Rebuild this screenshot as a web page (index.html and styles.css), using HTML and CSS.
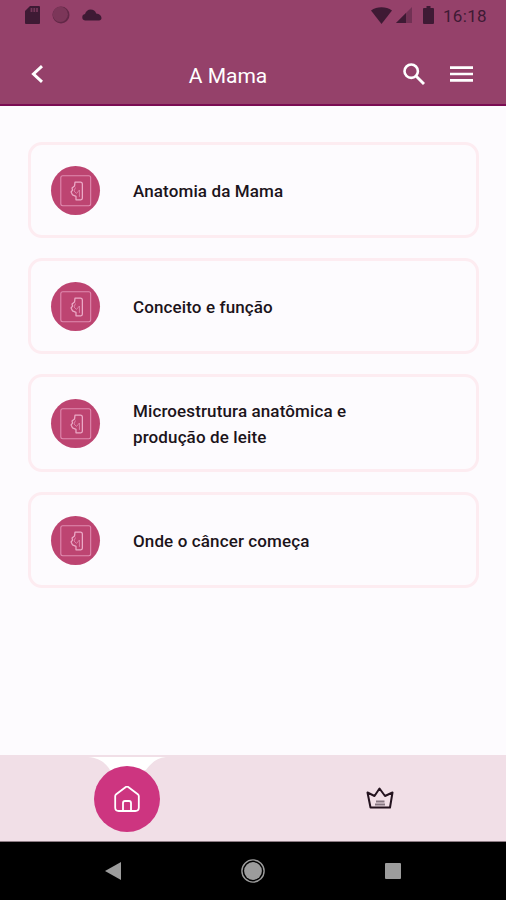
FILE: index.html
```html
<!DOCTYPE html>
<html lang="pt-BR">
<head>
    <meta charset="UTF-8">
    <meta name="viewport" content="width=device-width, initial-scale=1.0">
    <title>A Mama</title>
    <link rel="stylesheet" href="styles.css">
</head>
<body>
    <svg class="symbols" aria-hidden="true">
        <symbol id="icon-topic" viewBox="0 0 50 50">
            <rect x="10" y="10" width="30.500" height="30.500" rx="2" fill="none" stroke="#e08bb0" stroke-width="1.100"/>
            <path d="M24.500 16.500h5.500q2 0 2 2V33q0 1.500-1.500 1.500h-5V31l-3.500-1.500-1.500-3 1.500-2-.5-2 2.500-2z" fill="none" stroke="#eba9c6" stroke-width="1.300" stroke-linejoin="round"/>
            <path d="M25 22l-1.500 3.500L26 28l3-3.500v7" fill="none" stroke="#e08bb0" stroke-width=".9"/>
        </symbol>
    </svg>

    <header class="header">
        <div class="status-bar">
            <div class="status-left">
                <svg width="15" height="18" viewBox="0 0 15 18">
                    <path fill="#3e1a34" d="M5 0h9q1 0 1 1v16q0 1-1 1H1q-1 0-1-1V5z"/>
                    <path stroke="#743658" stroke-width="1.800" d="M6.500 2v4M9.300 2v4M12 2v4"/>
                </svg>
                <svg width="18" height="18" viewBox="0 0 18 18">
                    <circle cx="9" cy="9" r="8.500" fill="#622847"/>
                    <circle cx="8.300" cy="8.300" r="7.600" fill="#7c3659"/>
                </svg>
                <svg width="20" height="12" viewBox="0 0 20 12">
                    <path fill="#3e1a34" d="M3 11.500a3.300 3.300 0 0 1 0-6.500C4 2 6 .5 8.500.5c2.800 0 5 1.500 5.700 4 3.300.2 5.300 2.300 5.300 4.500 0 1.500-1 2.500-2.500 2.500z"/>
                </svg>
            </div>
            <div class="status-right">
                <svg class="wifi" width="21" height="17" viewBox="0 0 21 17">
                    <path fill="#3e1a34" d="M10.500 17L0 3.500C6-.8 15-.8 21 3.500z"/>
                </svg>
                <svg class="signal" width="16" height="16" viewBox="0 0 16 16">
                    <path fill="#713154" d="M16 0v16H0z"/>
                    <path fill="#3e1a34" d="M10 6v10H0z"/>
                </svg>
                <svg class="battery" width="11" height="18" viewBox="0 0 11 18">
                    <path fill="#3e1a34" d="M3.500 0h4v2H10q1 0 1 1v14q0 1-1 1H1q-1 0-1-1V3q0-1 1-1h2.500z"/>
                </svg>
                <span class="clock">16:18</span>
            </div>
        </div>
        <div class="toolbar">
            <svg class="back" width="12" height="18" viewBox="0 0 12 18">
                <path d="M11 1.200L2.500 9l8.500 7.800" fill="none" stroke="#fff" stroke-width="3"/>
            </svg>
            <h1 class="title">A Mama</h1>
            <div class="actions">
                <svg width="22" height="22" viewBox="0 0 22 22">
                    <circle cx="8.200" cy="8.200" r="6.700" fill="none" stroke="#fff" stroke-width="2.600"/>
                    <path d="M13 13l8 8" stroke="#fff" stroke-width="2.900"/>
                </svg>
                <svg width="23" height="16" viewBox="0 0 23 16">
                    <path d="M0 1.600h23M0 8h23M0 14.400h23" stroke="#fff" stroke-width="2.600"/>
                </svg>
            </div>
        </div>
    </header>

    <main class="content">
        <a class="card">
            <svg class="card-icon"><use href="#icon-topic"/></svg>
            <span class="card-title">Anatomia da Mama</span>
        </a>
        <a class="card">
            <svg class="card-icon"><use href="#icon-topic"/></svg>
            <span class="card-title">Conceito e função</span>
        </a>
        <a class="card">
            <svg class="card-icon"><use href="#icon-topic"/></svg>
            <span class="card-title">Microestrutura anatômica e produção de leite</span>
        </a>
        <a class="card">
            <svg class="card-icon"><use href="#icon-topic"/></svg>
            <span class="card-title">Onde o câncer começa</span>
        </a>
    </main>

    <nav class="tab-bar">
        <div class="tab tab-active">
            <svg class="notch" width="80" height="14" viewBox="0 0 80 14">
                <path fill="#fff" d="M0 1h78C69 2 64 6 58 14H22C17 6 11 2 0 1z"/>
            </svg>
            <span class="tab-circle">
                <svg width="26" height="26" viewBox="0 0 26 26" fill="none" stroke="#fff" stroke-width="1.800" stroke-linejoin="round">
                    <path d="M1.200 10q0-1 1-1.800L11.800 1q1.200-.8 2.400 0l9.600 7.200q1 .8 1 1.800v11.500q0 3.500-3.500 3.500H4.700q-3.500 0-3.500-3.500z"/>
                    <path d="M9 25v-8q0-2 2-2h4q2 0 2 2v8"/>
                </svg>
            </span>
        </div>
        <div class="tab">
            <svg width="28" height="22" viewBox="0 0 28 22">
                <path d="M4.500 20.500L1.500 5.500l7 3.500 5-7.500L19 9l7.500-3.500L24 20.500z" fill="none" stroke="#24131f" stroke-width="2" stroke-linejoin="round"/>
                <path d="M10 14.500h8.500M9 17.500h10" stroke="#867681" stroke-width="2.200"/>
            </svg>
        </div>
    </nav>

    <footer class="system-nav">
        <svg width="16" height="18" viewBox="0 0 16 18">
            <path fill="#9c9c9c" d="M16 0v18L0 9z"/>
        </svg>
        <svg width="24" height="24" viewBox="0 0 24 24">
            <circle cx="12" cy="12" r="11.100" fill="none" stroke="#9c9c9c" stroke-width="1.400"/>
            <circle cx="12" cy="12" r="8.900" fill="#9c9c9c"/>
        </svg>
        <svg width="16" height="16" viewBox="0 0 16 16">
            <rect width="16" height="16" rx="1" fill="#9c9c9c"/>
        </svg>
    </footer>
</body>
</html>
```
FILE: styles.css
```css
* {
    box-sizing: border-box;
}
body {
    display: flex;
    flex-direction: column;
    height: 900px;
    margin: 0;
    font-family: Roboto, sans-serif;
    background-color: #fdfbfe;
    color: #1c141b;
}
svg {
    display: block;
    flex: none;
}
.symbols {
    position: absolute;
    width: 0;
    height: 0;
}

/* header */
.header {
    height: 106px;
    background-color: #95416a;
    border-bottom: 2px solid #7b0c53;
}
.status-bar {
    display: flex;
    justify-content: space-between;
    align-items: center;
    height: 30px;
    padding: 0 19px 0 25px;
}
.status-left,
.status-right {
    display: flex;
    align-items: center;
}
.status-left {
    gap: 12px;
}
.wifi {
    margin-right: 4px;
}
.signal {
    margin-right: 11px;
}
.battery {
    margin-right: 9px;
}
.clock {
    width: 44px;
    font-size: 17px;
    line-height: 20px;
    letter-spacing: 0.3px;
    color: #3e1a34;
    padding-top: 2px;
    white-space: nowrap;
}
.toolbar {
    display: flex;
    align-items: center;
    justify-content: space-between;
    height: 58px;
    margin-top: 15px;
    padding: 0 33px 0 31px;
}
.title {
    margin: 0;
    padding: 3px 0 0 10px;
    font-size: 21px;
    font-weight: 400;
    color: #fff;
}
.actions {
    display: flex;
    align-items: center;
    gap: 25px;
}

/* cards */
.content {
    display: flex;
    flex: 1;
    flex-direction: column;
    gap: 20px;
    padding: 36px 27px 0 28px;
}
.card {
    display: flex;
    align-items: center;
    min-height: 96px;
    padding: 19px 20px;
    border: 3px solid #fdecf1;
    border-radius: 14px;
}
.card-icon {
    width: 49px;
    height: 49px;
    margin-right: 33px;
    border-radius: 50%;
    background-color: #bd4471;
}
.card-title {
    max-width: 240px;
    padding-top: 2px;
    font-size: 17px;
    font-weight: 500;
    line-height: 26px;
    letter-spacing: 0.12px;
}

/* bottom tabs */
.tab-bar {
    display: flex;
    height: 87px;
    background-color: #f1dfe7;
    border-bottom: 1px solid #8d7c84;
}
.tab {
    position: relative;
    display: flex;
    flex: 1;
    align-items: center;
    justify-content: center;
}
.tab-active {
    padding-top: 2px;
}
.notch {
    position: absolute;
    top: 1px;
    left: 88px;
}
.tab-circle {
    position: relative;
    display: flex;
    align-items: center;
    justify-content: center;
    width: 66px;
    height: 66px;
    border-radius: 50%;
    background-color: #cd3580;
}

/* android buttons */
.system-nav {
    display: flex;
    align-items: center;
    justify-content: space-between;
    height: 58px;
    padding: 0 105px;
    background-color: #000;
}
```
